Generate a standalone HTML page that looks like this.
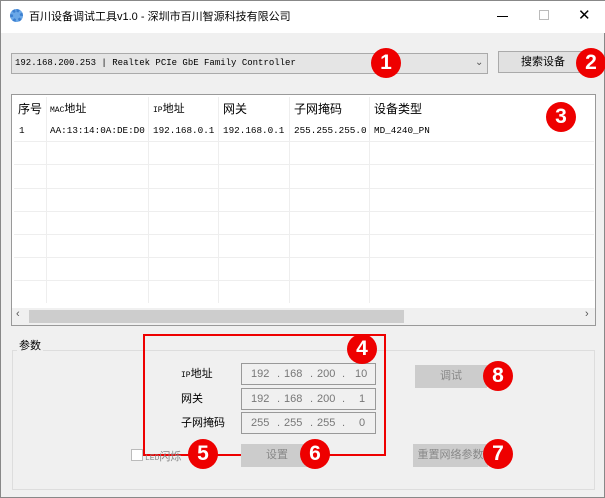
<!DOCTYPE html>
<html><head><meta charset="utf-8"><style>
*{margin:0;padding:0;box-sizing:border-box}
body{width:605px;height:498px;background:#f0f0f0;font-family:"Liberation Sans","Noto Sans CJK SC",sans-serif;font-size:12px;color:#000;position:relative;overflow:hidden;border:1px solid #888}
.a{position:absolute}
.mono{font-family:"Liberation Mono","Noto Sans CJK SC",monospace;font-size:9px}
.c{position:absolute;width:30px;height:30px;border-radius:50%;background:#e00;color:#fff;font-weight:bold;font-size:21px;text-align:center;line-height:30px}
.btn{position:absolute;background:#ccc;border:1px solid #ccc;color:#888;text-align:center;font-size:12px}
.ip{position:absolute;left:240px;width:135px;height:22px;border:1px solid #999;background:#f0f0f0;color:#777;font-size:11px}
.ip span{position:absolute;top:4px}
.vl{position:absolute;top:2px;width:1px;height:206px;background:#eee}
.hl{position:absolute;left:2px;width:580px;height:1px;background:#eee}
.t{font-size:9.3px;top:30px}
</style></head><body>
<div class="a" style="left:0;top:0;width:605px;height:32px;background:#fff"></div>
<div class="a" style="left:9px;top:8px;width:13px;height:13px;border-radius:50%;border:3px dotted #3b7fd0;background:#6aa8e8"></div>
<div class="a" style="left:28px;top:7px;font-size:11px">百川设备调试工具v1.0 - 深圳市百川智源科技有限公司</div>
<div class="a" style="left:496px;top:15px;width:11px;height:1px;background:#000"></div>
<div class="a" style="left:538px;top:9px;width:10px;height:10px;border:1px solid #bbb"></div>
<div class="a" style="left:577px;top:5px;font-size:15px">✕</div>

<div class="a" style="left:10px;top:52px;width:477px;height:21px;border:1px solid #aaa;background:#e5e5e5"></div>
<div class="a mono" style="left:14px;top:57px">192.168.200.253 | Realtek PCIe GbE Family Controller</div>
<div class="a" style="left:474px;top:56px;color:#555;font-size:10px">⌄</div>
<div class="a" style="left:497px;top:50px;width:90px;height:22px;border:1px solid #aaa;background:#e1e1e1;text-align:center;line-height:20px;font-size:11px">搜索设备</div>

<div class="a" style="left:10px;top:93px;width:585px;height:232px;border:1px solid #999;background:#fff">
<div class="vl" style="left:34px"></div><div class="vl" style="left:136px"></div><div class="vl" style="left:206px"></div><div class="vl" style="left:277px"></div><div class="vl" style="left:357px"></div>
<div class="hl" style="top:46px"></div><div class="hl" style="top:69px"></div><div class="hl" style="top:93px"></div><div class="hl" style="top:116px"></div><div class="hl" style="top:139px"></div><div class="hl" style="top:162px"></div><div class="hl" style="top:185px"></div>
<div class="a" style="left:6px;top:5px">序号</div>
<div class="a" style="left:38px;top:5px;font-size:11px"><span class="mono" style="font-size:8px">MAC</span>地址</div>
<div class="a" style="left:141px;top:5px;font-size:11px"><span class="mono" style="font-size:8px">IP</span>地址</div>
<div class="a" style="left:211px;top:5px">网关</div>
<div class="a" style="left:282px;top:5px">子网掩码</div>
<div class="a" style="left:362px;top:5px">设备类型</div>
<div class="a mono t" style="left:7px">1</div>
<div class="a mono t" style="left:38px">AA:13:14:0A:DE:D0</div>
<div class="a mono t" style="left:141px">192.168.0.1</div>
<div class="a mono t" style="left:211px">192.168.0.1</div>
<div class="a mono t" style="left:282px">255.255.255.0</div>
<div class="a mono t" style="left:362px">MD_4240_PN</div>
<div class="a" style="left:0;top:213px;width:583px;height:17px;background:#f0f0f0"></div>
<div class="a" style="left:17px;top:215px;width:375px;height:13px;background:#cdcdcd"></div>
<div class="a" style="left:4px;top:213px;font-size:11px;color:#555">‹</div>
<div class="a" style="left:573px;top:213px;font-size:11px;color:#555">›</div>
</div>

<div class="a" style="left:11px;top:349px;width:583px;height:140px;border:1px solid #ddd"></div>
<div class="a" style="left:16px;top:336px;background:#f0f0f0;padding:0 2px;font-size:11px">参数</div>

<div class="a" style="left:180px;top:364px;font-size:11px"><span class="mono" style="font-size:8px">IP</span>地址</div>
<div class="a" style="left:180px;top:389px;font-size:11px">网关</div>
<div class="a" style="left:180px;top:413px;font-size:11px">子网掩码</div>
<div class="ip" style="top:362px"><span style="left:9px">192</span><span style="left:35px">.</span><span style="left:42px">168</span><span style="left:68px">.</span><span style="left:75px">200</span><span style="left:100px">.</span><span style="left:113px">10</span></div>
<div class="ip" style="top:387px"><span style="left:9px">192</span><span style="left:35px">.</span><span style="left:42px">168</span><span style="left:68px">.</span><span style="left:75px">200</span><span style="left:100px">.</span><span style="left:117px">1</span></div>
<div class="ip" style="top:411px"><span style="left:9px">255</span><span style="left:35px">.</span><span style="left:42px">255</span><span style="left:68px">.</span><span style="left:75px">255</span><span style="left:100px">.</span><span style="left:117px">0</span></div>
<div class="a" style="left:142px;top:333px;width:243px;height:122px;border:2px solid #e00"></div>

<div class="btn" style="left:414px;top:364px;width:72px;height:23px;line-height:21px;font-size:11px">调试</div>
<div class="btn" style="left:240px;top:443px;width:72px;height:23px;line-height:21px;font-size:11px">设置</div>
<div class="btn" style="left:412px;top:443px;width:75px;height:23px;line-height:21px;overflow:hidden;white-space:nowrap;font-size:11px">重置网络参数</div>
<div class="a" style="left:130px;top:448px;width:12px;height:12px;border:1px solid #bbb;background:#fff"></div>
<div class="a" style="left:144px;top:447px;color:#888;font-size:11px"><span class="mono" style="font-size:8px">LED</span>闪烁</div>

<div class="c" style="left:370px;top:47px">1</div>
<div class="c" style="left:575px;top:47px">2</div>
<div class="c" style="left:545px;top:101px">3</div>
<div class="c" style="left:346px;top:333px">4</div>
<div class="c" style="left:187px;top:438px">5</div>
<div class="c" style="left:299px;top:438px">6</div>
<div class="c" style="left:482px;top:438px">7</div>
<div class="c" style="left:482px;top:360px">8</div>
</body></html>
